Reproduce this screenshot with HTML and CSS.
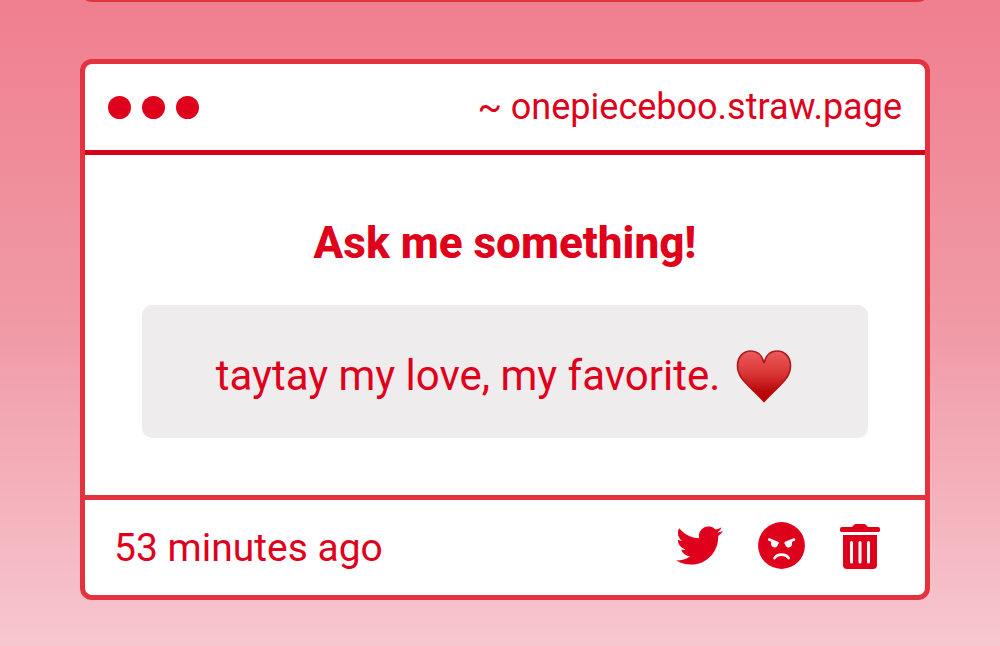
FILE: index.html
```html
<!DOCTYPE html>
<html lang="en">
<head>
  <meta charset="UTF-8">
  <meta name="viewport" content="width=device-width, initial-scale=1.0">
  <title>onepieceboo.straw.page</title>
  <link rel="stylesheet" href="styles.css">
</head>
<body>
  <main class="feed">
    <div class="card card-previous"></div>

    <article class="card">
      <header class="card-header">
        <div class="dots">
          <span class="dot"></span>
          <span class="dot"></span>
          <span class="dot"></span>
        </div>
        <span class="site">~ onepieceboo.straw.page</span>
      </header>

      <div class="card-body">
        <h1 class="title">Ask me something!</h1>
        <p class="message">
          <span>taytay my love, my favorite.</span>
          <svg class="heart" viewBox="0 0 56 54" role="img" aria-label="heart">
            <defs>
              <linearGradient id="heart-fill" x1="0" y1="0" x2="0" y2="1">
                <stop offset="0" stop-color="#ee5a5a"/>
                <stop offset="0.45" stop-color="#d93636"/>
                <stop offset="0.8" stop-color="#b90808"/>
                <stop offset="1" stop-color="#b00000"/>
              </linearGradient>
              <linearGradient id="heart-edge" x1="0" y1="0" x2="0" y2="1">
                <stop offset="0" stop-color="#a91d22"/>
                <stop offset="1" stop-color="#b80808"/>
              </linearGradient>
            </defs>
            <path fill="url(#heart-fill)" stroke="url(#heart-edge)" stroke-width="1.6" d="M28 14C26 6 21 2 15 2C7 2 1.500 8 1.500 17C1.500 30 13 36 28 52.500C43 36 54.500 30 54.500 17C54.500 8 49 2 41 2C35 2 30 6 28 14Z"/>
          </svg>
        </p>
      </div>

      <footer class="card-footer">
        <span class="time">53 minutes ago</span>
        <div class="actions">
          <button class="action" type="button" aria-label="Share on Twitter">
            <svg width="47" height="47" viewBox="0 0 24 24">
              <path fill="currentColor" d="M23.953 4.570a10 10 0 01-2.825.775 4.958 4.958 0 002.163-2.723c-.951.555-2.005.959-3.127 1.184a4.920 4.920 0 00-8.384 4.482C7.690 8.095 4.067 6.130 1.640 3.162a4.822 4.822 0 00-.666 2.475c0 1.710.870 3.213 2.188 4.096a4.904 4.904 0 01-2.228-.616v.060a4.923 4.923 0 003.946 4.827 4.996 4.996 0 01-2.212.085 4.936 4.936 0 004.604 3.417 9.867 9.867 0 01-6.102 2.105c-.390 0-.779-.023-1.170-.067a13.995 13.995 0 007.557 2.209c9.053 0 13.998-7.496 13.998-13.985 0-.210 0-.420-.015-.630A9.935 9.935 0 0024 4.590z"/>
            </svg>
          </button>
          <button class="action" type="button" aria-label="Report">
            <svg width="47" height="47" viewBox="0 0 47 47">
              <circle cx="23.500" cy="23.500" r="23.400" fill="currentColor"/>
              <g fill="none" stroke="#fff" stroke-width="2.600" stroke-linecap="round">
                <path d="M11.200 17.500L19.500 21M36 17.500L27.700 21"/>
                <path d="M16.500 36.200Q18.500 32.600 23.600 32.600T30.700 36.200"/>
              </g>
              <path fill="#fff" d="M13 18.500L20 21.300A3.500 3.500 0 1 1 13.200 21ZM34.200 18.500L27.200 21.300A3.500 3.500 0 1 0 34 21Z"/>
            </svg>
          </button>
          <button class="action" type="button" aria-label="Delete">
            <svg width="40" height="47" viewBox="0 0 40 47">
              <path fill="currentColor" d="M2 5H12L14 2.800Q14.500 2 16 2H24Q25.500 2 26 2.800L28 5H38Q40 5 40 7V8.500Q40 10 38 10H2Q0 10 0 8.500V7Q0 5 2 5Z"/>
              <path fill="currentColor" d="M3 13H37V43Q37 47 33 47H7Q3 47 3 43Z"/>
              <path fill="none" stroke="#fff" stroke-width="3" stroke-linecap="round" d="M11.500 20.500V40M20 20.500V40M28.500 20.500V40"/>
            </svg>
          </button>
        </div>
      </footer>
    </article>
  </main>
</body>
</html>
```

FILE: styles.css
```css
* {
  box-sizing: border-box;
}
body {
  margin: 0;
  min-height: 100vh;
  background: linear-gradient(#f07f8f, #f09aa6 50%, #f7c7cf);
  color: #df001b;
  font-family: Roboto, "Liberation Sans", sans-serif;
}
.feed {
  padding: 0 7% 0 8%;
  overflow: hidden;
}
.card {
  background: #fff;
  border: 5px solid #e2333f;
  border-radius: 12px;
}
.card-previous {
  height: 40px;
  margin-top: -38px;
  margin-bottom: 57px;
}
.card-header,
.card-footer {
  display: flex;
  justify-content: space-between;
}
.card-header {
  align-items: center;
  height: 91px;
  padding: 0 23px;
  border-bottom: 5px solid #d90019;
}
.dots {
  display: flex;
  gap: 11px;
}
.dot {
  width: 23px;
  height: 23px;
  border-radius: 50%;
  background: #df001b;
}
.site {
  font-size: 36px;
  line-height: 52px;
}
.card-body {
  padding: 58px 57px 57px;
}
.title {
  margin: 0 0 32px;
  font-size: 44px;
  font-weight: 800;
  line-height: 60px;
  text-align: center;
}
.message {
  display: flex;
  align-items: center;
  justify-content: center;
  gap: 16px;
  margin: 0;
  padding: 41px 26px 32px 24px;
  border-radius: 10px;
  background: #eeecec;
  font-size: 42px;
  line-height: 60px;
}
.heart {
  width: 56px;
  height: 54px;
  flex-shrink: 0;
}
.card-footer {
  align-items: flex-start;
  padding: 22px 45px 21px 29px;
  border-top: 5px solid #e2333f;
}
.time {
  font-size: 39px;
  line-height: 52px;
}
.actions {
  display: flex;
  gap: 35px;
}
.action {
  padding: 0;
  border: 0;
  background: none;
  color: inherit;
  cursor: pointer;
}
.action svg {
  display: block;
}
```
